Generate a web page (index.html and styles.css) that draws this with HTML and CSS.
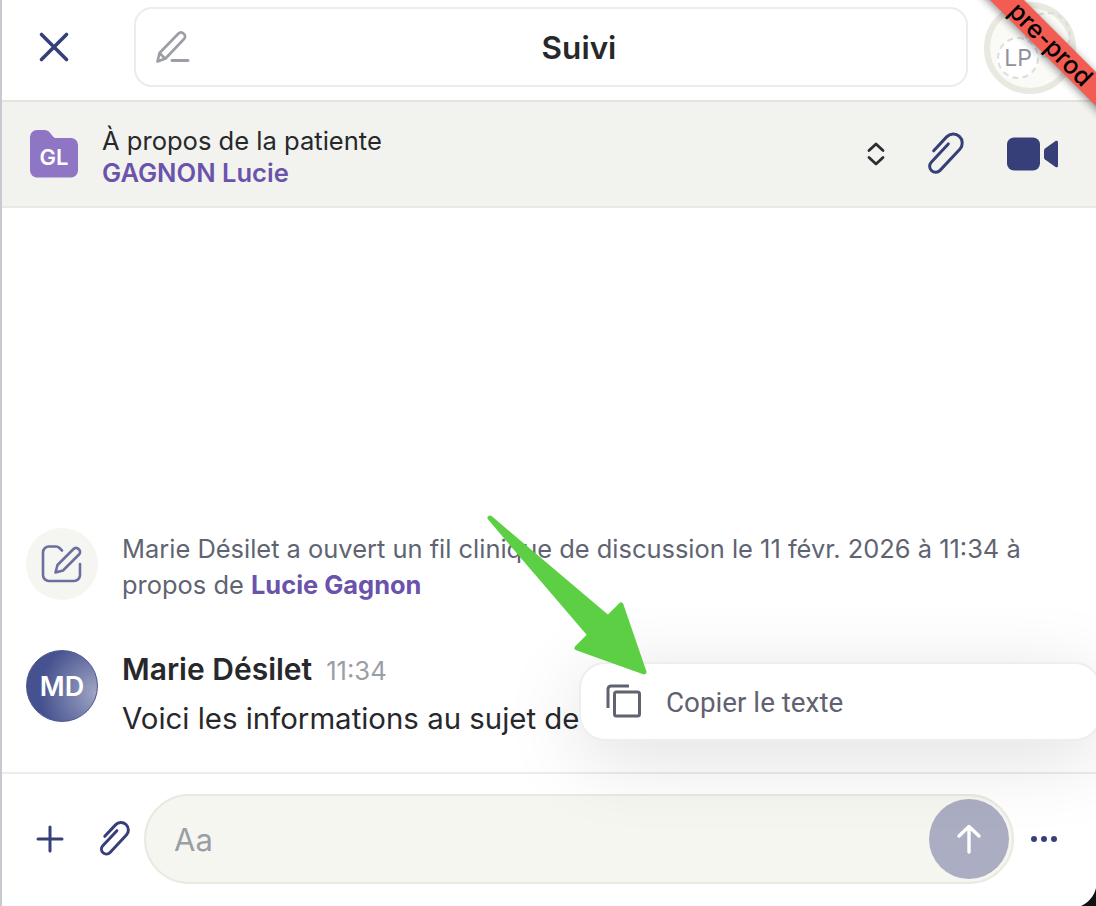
FILE: index.html
```html
<!DOCTYPE html>
<html lang="fr">
<head>
    <meta charset="UTF-8">
    <meta name="viewport" content="width=device-width, initial-scale=1.0">
    <title>Suivi</title>
    <link rel="stylesheet" href="styles.css">
</head>
<body>
    <div class="app">
        <div class="topbar">
            <button class="close-button" type="button" aria-label="Fermer">
                <svg width="32" height="32" viewBox="0 0 32 32"><path d="M3.5 3.5 28.500 28.500M28.500 3.500 3.500 28.500" fill="none" stroke="#373f78" stroke-width="3.600" stroke-linecap="round"/></svg>
            </button>
            <div class="title-box">
                <svg class="title-pencil" width="36" height="34" viewBox="0 0 36 34"><path d="M2.500 31.500 4.500 23 23.500 3.500a3.400 3.400 0 0 1 5 0l.5.500a3.400 3.400 0 0 1 0 5L10.500 28.500Z M5 23.500l5 5" fill="none" stroke="#9b9ea5" stroke-width="2.600" stroke-linejoin="round"/><path d="M17 30.500H33" stroke="#9b9ea5" stroke-width="2.800" stroke-linecap="round"/></svg>
                <span class="title-text">Suivi</span>
            </div>
            <div class="user-avatar">
                <div class="user-badge">LP</div>
            </div>
        </div>

        <div class="patient-bar">
            <div class="patient-folder">
                <svg width="48" height="48" viewBox="0 0 48 48"><path d="M0 7a7 7 0 0 1 7-7h7c3.500 0 5 1.500 7 4l2 2.500c1 1.200 2 1.500 3.500 1.500H41a7 7 0 0 1 7 7v25.500a7 7 0 0 1-7 7H7a7 7 0 0 1-7-7Z" fill="#8f76c4"/></svg>
                <span class="patient-initials">GL</span>
            </div>
            <div class="patient-info">
                <div class="patient-label">À propos de la patiente</div>
                <div class="patient-name">GAGNON Lucie</div>
            </div>
            <div class="patient-actions">
                <svg class="action-chevrons" width="20" height="26" viewBox="0 0 20 26"><path d="M3 9.500 10 3l7 6.500M3 16.500 10 23l7-6.500" fill="none" stroke="#2b2d33" stroke-width="2.800" stroke-linecap="round" stroke-linejoin="round"/></svg>
                <svg class="action-clip" width="42" height="46" viewBox="0 0 42 46"><g transform="rotate(43 21 23)"><path d="M12 27V8a9 9 0 0 1 18 0V37a6 6 0 0 1-12 0V12" fill="none" stroke="#373f78" stroke-width="3" stroke-linecap="round"/></g></svg>
                <svg class="action-video" width="52" height="34" viewBox="0 0 52 34"><rect x="0" y="0.500" width="33" height="33" rx="7" fill="#373f78"/><path d="M37 13.500c0-.8.300-1.400 1-2l10.500-7.500c1.300-.8 2.500-.2 2.500 1.300v23.400c0 1.500-1.200 2.100-2.500 1.300L38 22.500c-.7-.600-1-1.200-1-2Z" fill="#373f78"/></svg>
            </div>
        </div>

        <div class="thread">
            <div class="system-row">
                <div class="round-icon system-icon">
                    <svg width="42" height="38" viewBox="0 0 42 38"><path d="M21 5.500 18.500 3c-1-1-2-1.500-3.500-1.500H8A6 6 0 0 0 2 7.500V30a6 6 0 0 0 6 6h25a6 6 0 0 0 6-6V19" fill="none" stroke="#6a6f9f" stroke-width="2.600" stroke-linecap="round"/><path d="M14.500 27.500 16.500 20 32.500 4a3.400 3.400 0 0 1 5 0l.5.500a3.400 3.400 0 0 1 0 5L22 25.500Z" fill="none" stroke="#6a6f9f" stroke-width="2.600" stroke-linejoin="round"/></svg>
                </div>
                <p class="system-text">Marie Désilet a ouvert un fil clinique de discussion le 11 févr. 2026 à 11:34 à propos de <strong>Lucie Gagnon</strong></p>
            </div>
            <div class="message-row">
                <div class="round-icon message-avatar">MD</div>
                <div class="message-main">
                    <div class="message-head">
                        <span class="message-author">Marie Désilet</span>
                        <span class="message-time">11:34</span>
                    </div>
                    <div class="message-body">Voici les informations au sujet de</div>
                </div>
            </div>
        </div>

        <div class="composer">
            <svg class="composer-plus" width="30" height="30" viewBox="0 0 30 30"><path d="M15 3V27M3 15H27" stroke="#373f78" stroke-width="3" stroke-linecap="round"/></svg>
            <svg class="composer-clip" width="35" height="38" viewBox="0 0 42 46"><g transform="rotate(43 21 23)"><path d="M12 27V8a9 9 0 0 1 18 0V37a6 6 0 0 1-12 0V12" fill="none" stroke="#373f78" stroke-width="3.600" stroke-linecap="round"/></g></svg>
            <div class="composer-input">
                <span class="composer-placeholder">Aa</span>
                <div class="send-button">
                    <svg width="26" height="30" viewBox="0 0 26 30"><path d="M13 28V3M3 12 13 2.500 23 12" fill="none" stroke="#fff" stroke-width="3.400" stroke-linecap="round" stroke-linejoin="round"/></svg>
                </div>
            </div>
            <div class="composer-more"><span></span><span></span><span></span></div>
        </div>

        <div class="context-menu">
            <svg width="36" height="34" viewBox="0 0 36 34"><path d="M2 24V5a3 3 0 0 1 3-3h18" fill="none" stroke="#5f6270" stroke-width="3"/><rect x="8.500" y="8" width="25" height="24" rx="2" fill="none" stroke="#5f6270" stroke-width="3"/></svg>
            <span class="menu-label">Copier le texte</span>
        </div>

        <svg class="green-arrow" width="170" height="170" viewBox="0 0 170 170"><polygon points="4,5 122,105 135,92 158,159 91,135 104,122" fill="#5ccf45" stroke="#5ccf45" stroke-width="5" stroke-linejoin="round"/></svg>

        <div class="env-banner">pre-prod</div>

        <svg class="window-corner" width="15" height="18" viewBox="0 0 15 18"><path d="M15 0V18H0C8 14 13 8 15 0Z" fill="#111"/></svg>
    </div>
</body>
</html>
```

FILE: styles.css
```css
* {
    box-sizing: border-box;
}

body {
    margin: 0;
    background: #ffffff;
    font-family: 'Inter', 'Liberation Sans', sans-serif;
    color: #27282c;
}

svg {
    display: block;
    flex-shrink: 0;
    overflow: visible;
}

.app {
    position: relative;
    display: flex;
    flex-direction: column;
    height: 906px;
    overflow: hidden;
    border-left: 2px solid #c9c9d2;
    background: #ffffff;
}

/* barre du haut */
.topbar {
    display: flex;
    align-items: center;
    height: 102px;
    padding: 0 0 6px 36px;
    border-bottom: 2px solid #e4e4de;
}

.close-button {
    padding: 0;
    border: none;
    background: none;
}

.title-box {
    position: relative;
    display: flex;
    align-items: center;
    justify-content: center;
    width: 834px;
    height: 80px;
    margin-left: 64px;
    padding-left: 56px;
    border: 2px solid #ececec;
    border-radius: 18px;
}

.title-pencil {
    position: absolute;
    left: 19px;
    top: 21px;
}

.title-text {
    font-size: 31.500px;
    font-weight: 600;
}

.user-avatar {
    position: relative;
    width: 92px;
    height: 92px;
    margin: 2px 0 0 16px;
    border: 6px solid #e9e9e1;
    border-radius: 50%;
    background: #fafaf7;
}

.user-avatar::before {
    content: "";
    position: absolute;
    left: 35px;
    top: 4px;
    width: 42px;
    height: 42px;
    border: 2px dashed #dddddd;
    border-radius: 50%;
}

.user-badge {
    position: absolute;
    left: 7px;
    top: 29px;
    display: flex;
    align-items: center;
    justify-content: center;
    width: 42px;
    height: 42px;
    border: 2px dashed #dddddd;
    border-radius: 50%;
    background: #ffffff;
    font-size: 23px;
    color: #8f939c;
}

/* bandeau patiente */
.patient-bar {
    display: flex;
    align-items: center;
    height: 106px;
    padding: 0 37px 0 28px;
    background: #f2f3ee;
    border-bottom: 2px solid #e9e9e4;
}

.patient-folder {
    position: relative;
    width: 48px;
    height: 48px;
}

.patient-initials {
    position: absolute;
    left: 0;
    right: 0;
    top: 14px;
    text-align: center;
    font-size: 22px;
    font-weight: 600;
    color: #ffffff;
}

.patient-info {
    margin: 6px 0 0 24px;
    font-size: 25.550px;
    line-height: 32px;
}

.patient-name {
    font-weight: 600;
    color: #6b52ac;
}

.patient-actions {
    display: flex;
    align-items: center;
    margin-left: auto;
}

.action-chevrons {
    margin-right: 1px;
}

.action-clip {
    margin-left: 35px;
}

.action-video {
    margin-left: 43px;
}

/* fil de discussion */
.thread {
    display: flex;
    flex: 1;
    flex-direction: column;
    justify-content: flex-end;
    gap: 47px;
    padding: 0 24px 35px;
}

.system-row,
.message-row {
    display: flex;
    gap: 24px;
}

.round-icon {
    display: flex;
    align-items: center;
    justify-content: center;
    width: 72px;
    height: 72px;
    border-radius: 50%;
    flex-shrink: 0;
}

.system-icon {
    background: #f5f6f1;
}

.system-text {
    margin: 3px 0 0;
    font-size: 25.450px;
    line-height: 36px;
    color: #5f6472;
}

.system-text strong {
    font-weight: 700;
    color: #6b52ac;
}

.message-avatar {
    border: 1px solid #4a5590;
    background: radial-gradient(circle at 100% 60%, #a0a6c4, #46528f 70%);
    font-size: 27px;
    font-weight: 600;
    color: #ffffff;
}

.message-head {
    display: flex;
    align-items: baseline;
    gap: 14px;
    height: 38px;
    line-height: 38px;
}

.message-author {
    font-size: 30px;
    font-weight: 600;
}

.message-time {
    font-size: 25.600px;
    color: #9b9ea5;
}

.message-body {
    margin-top: 13px;
    font-size: 29.400px;
    line-height: 36px;
}

/* zone de saisie */
.composer {
    display: flex;
    align-items: center;
    height: 134px;
    padding: 0 0 2px 33px;
    border-top: 2px solid #ececec;
}

.composer-clip {
    margin-left: 30px;
}

.composer-input {
    display: flex;
    align-items: center;
    justify-content: space-between;
    width: 870px;
    height: 90px;
    margin-left: 14px;
    padding: 0 3px 0 28px;
    border: 2px solid #e9e9e1;
    border-radius: 45px;
    background: #f5f6f0;
}

.composer-placeholder {
    font-size: 31px;
    color: #9b9ea5;
}

.send-button {
    display: flex;
    align-items: center;
    justify-content: center;
    width: 80px;
    height: 80px;
    border-radius: 50%;
    background: #abaec3;
}

.composer-more {
    display: flex;
    gap: 4px;
    margin-left: 17px;
}

.composer-more span {
    width: 6px;
    height: 6px;
    border-radius: 50%;
    background: #373f78;
}

/* menu contextuel */
.context-menu {
    position: absolute;
    left: 577px;
    top: 662px;
    display: flex;
    align-items: center;
    gap: 24px;
    width: 522px;
    height: 79px;
    padding-left: 25px;
    border: 2px solid #eeeeee;
    border-radius: 26px;
    background: #ffffff;
    box-shadow: 0 16px 80px rgba(0, 0, 0, 0.13);
}

.context-menu svg {
    margin-top: -2px;
}

.menu-label {
    padding-top: 2px;
    font-family: 'Roboto', 'Liberation Sans', sans-serif;
    font-size: 27.800px;
    color: #5f6270;
}

.green-arrow {
    position: absolute;
    left: 484px;
    top: 513px;
}

.env-banner {
    position: absolute;
    left: 949px;
    top: 32px;
    width: 200px;
    height: 24px;
    transform: rotate(45deg);
    background: #f25c52;
    box-shadow: 0 2px 8px rgba(0, 0, 0, 0.45);
    text-align: center;
    font-size: 25px;
    font-weight: 500;
    line-height: 24px;
    color: #000000;
}

.window-corner {
    position: absolute;
    right: 0;
    bottom: 0;
}
```
